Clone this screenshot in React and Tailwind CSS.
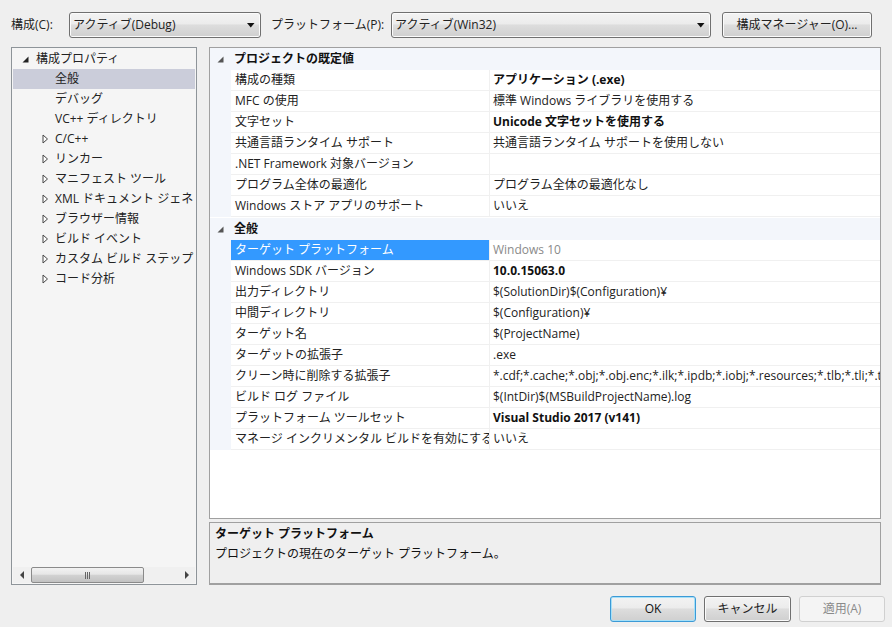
const FONT = "font-['Open_Sans','Noto_Sans_CJK_JP',sans-serif]";
const BTN = "bg-[linear-gradient(#f3f3f3_0%,#ececec_45%,#dddddd_50%,#cfcfcf_100%)] border border-[#707070] rounded-[3px] shadow-[inset_0_0_0_1px_#fbfbfb]";

function Expanded({ color = "#222" }) {
  return (
    <svg width="9" height="9" viewBox="0 0 9 9" className="shrink-0">
      <path d="M7.5 1.5V7.5H1.5Z" fill={color} />
    </svg>
  );
}
function Collapsed() {
  return (
    <svg width="7" height="10" viewBox="0 0 7 10" className="shrink-0">
      <path d="M1 1L5.5 5L1 9Z" fill="#fff" stroke="#444" strokeWidth="1" />
    </svg>
  );
}
function Caret() {
  return (
    <svg width="8" height="5" viewBox="0 0 8 5" className="shrink-0">
      <path d="M0 0H7.5L3.75 4.5Z" fill="#111" />
    </svg>
  );
}
function Select({ text, className }) {
  return (
    <div className={`h-[26px] flex items-center justify-between pl-[3px] pr-[5px] ${BTN} ${className}`}>
      <span className="text-[#222]">{text}</span>
      <Caret />
    </div>
  );
}
function Button({ children, className = "", disabled, active }) {
  return (
    <div
      className={`h-[26px] flex items-center justify-center rounded-[3px] border ${
        disabled
          ? "w-[86px] border-[#d0d0d0] bg-[#f4f4f4] text-[#8a8a8a]"
          : active
          ? "w-[86px] border-[#3c9ad6] shadow-[inset_0_0_0_1px_#a6e0f8] bg-[linear-gradient(#f3f3f3_0%,#ececec_45%,#dddddd_50%,#cfcfcf_100%)] text-[#111]"
          : `${BTN} text-[#222]`
      } ${className}`}
    >
      {children}
    </div>
  );
}

const tree = [
  ["全般", false, true],
  ["デバッグ", false],
  ["VC++ ディレクトリ", false],
  ["C/C++", true],
  ["リンカー", true],
  ["マニフェスト ツール", true],
  ["XML ドキュメント ジェネレーター", true],
  ["ブラウザー情報", true],
  ["ビルド イベント", true],
  ["カスタム ビルド ステップ", true],
  ["コード分析", true],
];

const group1 = [
  ["構成の種類", "アプリケーション (.exe)", "bold"],
  ["MFC の使用", "標準 Windows ライブラリを使用する"],
  ["文字セット", "Unicode 文字セットを使用する", "bold"],
  ["共通言語ランタイム サポート", "共通言語ランタイム サポートを使用しない"],
  [".NET Framework 対象バージョン", ""],
  ["プログラム全体の最適化", "プログラム全体の最適化なし"],
  ["Windows ストア アプリのサポート", "いいえ"],
];
const group2 = [
  ["ターゲット プラットフォーム", "Windows 10", "selected"],
  ["Windows SDK バージョン", "10.0.15063.0", "bold"],
  ["出力ディレクトリ", "$(SolutionDir)$(Configuration)¥"],
  ["中間ディレクトリ", "$(Configuration)¥"],
  ["ターゲット名", "$(ProjectName)"],
  ["ターゲットの拡張子", ".exe"],
  ["クリーン時に削除する拡張子", "*.cdf;*.cache;*.obj;*.obj.enc;*.ilk;*.ipdb;*.iobj;*.resources;*.tlb;*.tli;*.tlh;*.tmp;*.rsp"],
  ["ビルド ログ ファイル", "$(IntDir)$(MSBuildProjectName).log"],
  ["プラットフォーム ツールセット", "Visual Studio 2017 (v141)", "bold"],
  ["マネージ インクリメンタル ビルドを有効にする", "いいえ"],
];

function Header({ title }) {
  return (
    <div className="h-[22px] flex items-center bg-[#f3f6fb] shrink-0">
      <div className="w-[21px] flex justify-center items-center shrink-0"><Expanded color="#555" /></div>
      <span className="font-bold pl-[3px] text-[#111] whitespace-nowrap">{title}</span>
    </div>
  );
}
function Row({ name, value, kind }) {
  const sel = kind === "selected";
  return (
    <div className="h-[21px] flex bg-[#f3f6fb] shrink-0">
      <div className="w-[21px] shrink-0" />
      <div className="flex flex-1 min-w-0 border-b border-[#f0f0f0] bg-white">
        <div className={`w-[259px] shrink-0 pl-[4px] overflow-hidden whitespace-nowrap leading-[20px] border-r border-[#f0f0f0] ${sel ? "bg-[#3399ff] text-white" : "text-[#222]"}`}>
          {name}
        </div>
        <div className={`flex-1 min-w-0 pl-[3px] overflow-hidden whitespace-nowrap leading-[20px] ${kind === "bold" ? "font-bold text-[#111]" : sel ? "text-[#8a8a8a]" : "text-[#222]"}`}>
          {value}
        </div>
      </div>
    </div>
  );
}

export default function App() {
  return (
    <div className={`w-[892px] h-[627px] bg-[#efefef] overflow-hidden text-[12px] flex flex-col pt-[12px] pl-[11px] ${FONT}`}>
      <div className="flex items-center h-[26px] shrink-0">
        <span className="w-[58px] text-[#222]">構成(C):</span>
        <Select text="アクティブ(Debug)" className="w-[192px]" />
        <span className="w-[130px] pl-[10px] text-[#222] whitespace-nowrap">プラットフォーム(P):</span>
        <Select text="アクティブ(Win32)" className="w-[320px]" />
        <div className={`ml-[11px] w-[150px] h-[26px] flex items-center justify-center text-[#222] ${BTN}`}>構成マネージャー(O)...</div>
      </div>

      <div className="flex mt-[9px] h-[538px] shrink-0">
        <div className="w-[186px] border border-[#8e9499] bg-[#f5f5f5] flex flex-col p-[1px] shrink-0">
          <div className="flex-1 min-h-0">
            <div className="h-[20px] flex items-center text-[#222]">
              <div className="w-[23px] pl-[8px] flex"><Expanded /></div>
              <span>構成プロパティ</span>
            </div>
            {tree.map(([label, arrow, selected]) => (
              <div key={label} className={`h-[20px] flex items-center text-[#222] overflow-hidden whitespace-nowrap ${selected ? "bg-[#cbcdda]" : ""}`}>
                <div className="w-[42px] pl-[29px] shrink-0 flex">{arrow && <Collapsed />}</div>
                <span>{label}</span>
              </div>
            ))}
          </div>
          <div className="h-[16px] flex items-center bg-[#f0f0f0] shrink-0">
            <div className="w-[18px] flex justify-center">
              <svg width="5" height="8" viewBox="0 0 5 8"><path d="M4 0V8L0 4Z" fill="#444" /></svg>
            </div>
            <div className="w-[113px] h-[16px] border border-[#8a8a8a] rounded-[2px] bg-[linear-gradient(#f2f2f2,#e6e6e6_45%,#d2d2d2_50%,#c2c2c2)] flex items-center justify-center text-[8px] leading-none text-[#555] tracking-[1px]">
              <span className="flex gap-[1px]">
                <i className="block w-[1px] h-[7px] bg-[#666]" />
                <i className="block w-[1px] h-[7px] bg-[#666]" />
                <i className="block w-[1px] h-[7px] bg-[#666]" />
              </span>
            </div>
            <div className="flex-1" />
            <div className="w-[18px] flex justify-center">
              <svg width="5" height="8" viewBox="0 0 5 8"><path d="M1 0V8L5 4Z" fill="#444" /></svg>
            </div>
          </div>
        </div>

        <div className="ml-[12px] w-[672px] flex flex-col">
          <div className="h-[472px] border border-[#a0a0a0] bg-white flex flex-col overflow-hidden shrink-0">
            <Header title="プロジェクトの既定値" />
            {group1.map((r) => <Row key={r[0]} name={r[0]} value={r[1]} kind={r[2]} />)}
            <div className="h-[1px] shrink-0" />
            <Header title="全般" />
            {group2.map((r) => <Row key={r[0]} name={r[0]} value={r[1]} kind={r[2]} />)}
          </div>
          <div className="mt-[3px] flex-1 border border-[#a0a0a0] border-b-2 bg-[#efefef] pl-[5px] pt-[1px]">
            <div className="font-bold leading-[20px] text-[#111]">ターゲット プラットフォーム</div>
            <div className="leading-[20px] text-[#111]">プロジェクトの現在のターゲット プラットフォーム。</div>
          </div>
        </div>
      </div>

      <div className="flex mt-[11px] pl-[599px] gap-[8px]">
        <Button active>OK</Button>
        <Button className="w-[87px]">キャンセル</Button>
        <Button disabled>適用(A)</Button>
      </div>
    </div>
  );
}
